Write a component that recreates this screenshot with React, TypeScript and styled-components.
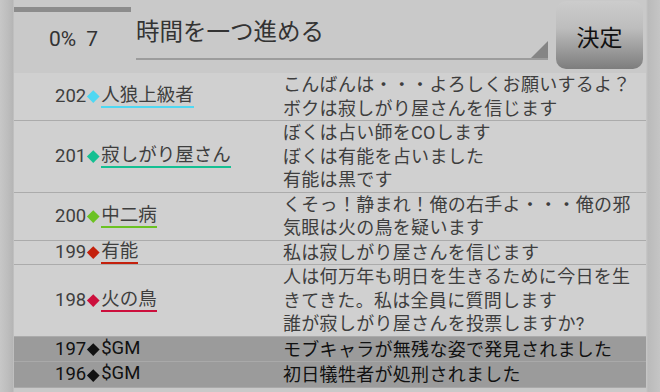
import React from "react";
import styled, { createGlobalStyle } from "styled-components";

const Global = createGlobalStyle`
  html, body { margin: 0; padding: 0; }
  body { font-family: Roboto, "Noto Sans CJK JP", sans-serif; background: #c8c8c8; }
`;

const Page = styled.div`
  width: 660px;
  height: 392px;
  overflow: hidden;
  box-sizing: border-box;
  padding: 0 14px 0 14px;
  display: flex;
  flex-direction: column;
  background: linear-gradient(
    to right,
    #c7c7c7 0px,
    #bdbdbd 8px,
    #b5b5b5 13px,
    #c9c9c9 14px,
    #c9c9c9 646px,
    #bababa 648px,
    #c5c5c5 660px
  );
`;

const Header = styled.div`
  display: flex;
  height: 73px;
  flex-shrink: 0;
`;

const Progress = styled.div`
  width: 117px;
  display: flex;
  flex-direction: column;
  align-items: center;
`;

const Bar = styled.div`
  align-self: stretch;
  height: 5px;
  margin-top: 7px;
  background: #8c8c8c;
`;

const Percent = styled.div`
  margin-top: 13px;
  font-size: 21px;
  line-height: 28px;
  color: #333;
  word-spacing: 5px;
  padding-left: 2px;
`;

const InputBox = styled.div`
  position: relative;
  width: 412px;
  height: 60px;
  margin-left: 5px;
  box-sizing: border-box;
  padding-top: 17px;
  border-bottom: 2px solid #9c9c9c;
  font-size: 23.5px;
  line-height: 30px;
  color: #333;

  &::after {
    content: "";
    position: absolute;
    right: 0;
    bottom: 0;
    width: 0;
    height: 0;
    border-left: 17px solid transparent;
    border-bottom: 17px solid #858585;
  }
`;

const Button = styled.div`
  width: 87px;
  height: 68px;
  margin: 1px 0 0 8px;
  border-radius: 10px;
  background: linear-gradient(#cccccc 0%, #bdbdbd 40%, #7d7d7d 100%);
  display: flex;
  align-items: center;
  justify-content: center;
  font-size: 23px;
  color: #111;
  padding-top: 2px;
  box-sizing: border-box;
`;

const Table = styled.div`
  display: flex;
  flex-direction: column;
`;

const Row = styled.div<{ $dark?: boolean }>`
  display: grid;
  grid-template-columns: 269px 1fr;
  background: ${(p) => (p.$dark ? "#9b9b9b" : "#d0d0d0")};
  border-bottom: 1px solid ${(p) => (p.$dark ? "#a9a9a9" : "#ababab")};
  padding: ${(p) => (p.$dark ? "1px 0 0" : "0")};
  color: ${(p) => (p.$dark ? "#111" : "#3e3e3e")};
`;

const NameCell = styled.div`
  padding-left: 41px;
  display: flex;
  align-items: center;
  font-size: 18.5px;
`;

const Num = styled.span`
  line-height: 23px;
`;

const Diamond = styled.span<{ $color: string }>`
  width: 15px;
  height: 23px;
  display: inline-flex;
  align-items: center;
  justify-content: center;

  &::before {
    content: "";
    width: 8.5px;
    height: 8.5px;
    background: ${(p) => p.$color};
    transform: rotate(45deg);
  }
`;

const Name = styled.span<{ $color?: string }>`
  display: inline-block;
  line-height: 21px;
  border-bottom: 2px solid ${(p) => p.$color ?? "transparent"};
`;

const Message = styled.div`
  font-size: 18px;
  line-height: 23.5px;
  white-space: pre-line;
  letter-spacing: 0.3px;
`;

type Entry = {
  no: number;
  name: string;
  color: string;
  msg: string;
  gm?: boolean;
};

const entries: Entry[] = [
  {
    no: 202,
    name: "人狼上級者",
    color: "#4fd8f2",
    msg: "こんばんは・・・よろしくお願いするよ？\nボクは寂しがり屋さんを信じます",
  },
  {
    no: 201,
    name: "寂しがり屋さん",
    color: "#14bf92",
    msg: "ぼくは占い師をCOします\nぼくは有能を占いました\n有能は黒です",
  },
  {
    no: 200,
    name: "中二病",
    color: "#6cc222",
    msg: "くそっ！静まれ！俺の右手よ・・・俺の邪\n気眼は火の鳥を疑います",
  },
  {
    no: 199,
    name: "有能",
    color: "#c4200c",
    msg: "私は寂しがり屋さんを信じます",
  },
  {
    no: 198,
    name: "火の鳥",
    color: "#cc0f3c",
    msg: "人は何万年も明日を生きるために今日を生\nきてきた。私は全員に質問します\n誰が寂しがり屋さんを投票しますか?",
  },
  {
    no: 197,
    name: "$GM",
    color: "#111",
    msg: "モブキャラが無残な姿で発見されました",
    gm: true,
  },
  {
    no: 196,
    name: "$GM",
    color: "#111",
    msg: "初日犠牲者が処刑されました",
    gm: true,
  },
];

export default function App() {
  return (
    <>
      <Global />
      <Page>
        <Header>
          <Progress>
            <Bar />
            <Percent>0% 7</Percent>
          </Progress>
          <InputBox>時間を一つ進める</InputBox>
          <Button>決定</Button>
        </Header>
        <Table>
          {entries.map((e) => (
            <Row key={e.no} $dark={e.gm}>
              <NameCell>
                <Num>{e.no}</Num>
                <Diamond $color={e.color} />
                <Name $color={e.gm ? undefined : e.color}>{e.name}</Name>
              </NameCell>
              <Message>{e.msg}</Message>
            </Row>
          ))}
        </Table>
      </Page>
    </>
  );
}
